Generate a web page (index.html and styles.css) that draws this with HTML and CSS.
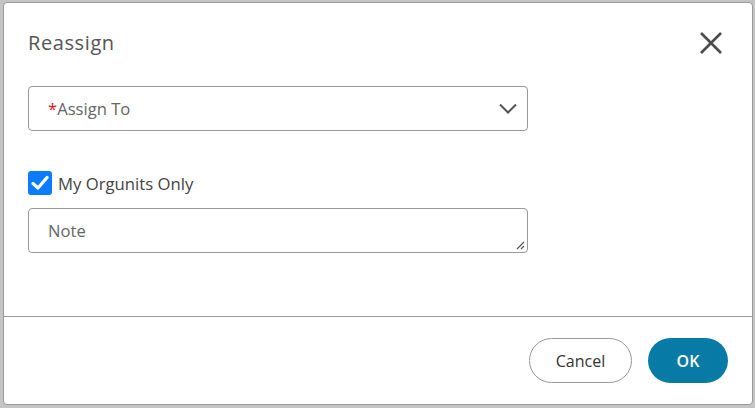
FILE: index.html
```html
<!DOCTYPE html>
<html>
<head>
<meta charset="utf-8">
<link rel="stylesheet" href="styles.css">
</head>
<body>
<div class="backdrop">
  <div class="dialog">
    <div class="dialog-body">
      <div class="header">
        <h2 class="title">Reassign</h2>
        <button class="close" aria-label="Close">
          <svg width="24" height="24" viewBox="0 0 24 24"><path d="M2 2 L22 22 M22 2 L2 22" stroke="#4a4a4a" stroke-width="2.6" fill="none"/></svg>
        </button>
      </div>
      <div class="select">
        <span class="placeholder"><span class="req">*</span>Assign To</span>
        <svg class="chevron" width="18" height="11" viewBox="0 0 18 11"><path d="M1 1.5 L9 9.5 L17 1.5" stroke="#555" stroke-width="2" fill="none"/></svg>
      </div>
      <label class="check">
        <span class="box"><svg width="18" height="16" viewBox="0 0 18 16"><path d="M2 8.5 L7 13 L16 2.5" stroke="#fff" stroke-width="3.2" fill="none" stroke-linecap="round" stroke-linejoin="round"/></svg></span>
        <span class="check-label">My Orgunits Only</span>
      </label>
      <div class="note">
        <span class="placeholder">Note</span>
        <svg class="grip" width="9" height="9" viewBox="0 0 9 9"><path d="M8 1 L1 8 M8 5 L5 8" stroke="#555" stroke-width="1.2" fill="none"/></svg>
      </div>
    </div>
    <div class="footer">
      <button class="btn btn-cancel">Cancel</button>
      <button class="btn btn-ok">OK</button>
    </div>
  </div>
</div>
</body>
</html>
```
FILE: styles.css
```css
html, body {
  margin: 0;
  padding: 0;
}
body {
  background: #c4c4c4;
  width: 755px;
  height: 408px;
  overflow: hidden;
}
.backdrop {
  padding: 2px 2px 0 3px;
  height: 408px;
  box-sizing: border-box;
}
.dialog {
  background: #fff;
  border: 1px solid #9a9a9a;
  border-radius: 4px;
  height: 403px;
  box-sizing: border-box;
  display: flex;
  flex-direction: column;
  font-family: "Open Sans", Lato, sans-serif;
}
.dialog-body {
  padding: 27px 24px 0 24px;
  height: 314px;
  box-sizing: border-box;
  border-bottom: 1px solid #9a9a9a;
}
.header {
  display: flex;
  justify-content: space-between;
  align-items: center;
  height: 26px;
}
.title {
  margin: 0;
  font-weight: 400;
  font-size: 20px;
  letter-spacing: 0.6px;
  color: #555;
  line-height: 26px;
}
.close {
  border: none;
  background: none;
  padding: 0;
  margin-right: 5px;
  width: 24px;
  height: 24px;
  display: flex;
}
.select, .note {
  width: 500px;
  height: 45px;
  box-sizing: border-box;
  border: 1px solid #999;
  border-radius: 4px;
  display: flex;
  align-items: center;
  padding: 0 10px 0 19px;
  justify-content: space-between;
  position: relative;
}
.select {
  margin-top: 30px;
}
.placeholder {
  font-size: 16.6px;
  color: #666;
  margin-top: -1px;
}
.req {
  color: #e0141e;
}
.check {
  display: flex;
  align-items: center;
  margin-top: 40px;
  height: 24px;
}
.box {
  width: 24px;
  height: 24px;
  background: #0b7cff;
  border-radius: 3px;
  display: flex;
  align-items: center;
  justify-content: center;
}
.check-label {
  margin-left: 6px;
  font-size: 16.7px;
  color: #444;
}
.note {
  margin-top: 13px;
}
.grip {
  position: absolute;
  right: 2px;
  bottom: 2px;
}
.footer {
  flex: 1;
  display: flex;
  justify-content: flex-end;
  align-items: flex-start;
  padding: 21px 24px 0 0;
  gap: 16px;
}
.btn {
  height: 45px;
  border-radius: 23px;
  font-family: "Open Sans", sans-serif;
  font-size: 16px;
  padding: 0;
}
.btn-cancel {
  width: 103px;
  background: #fff;
  border: 1px solid #999;
  color: #333;
}
.btn-ok {
  width: 80px;
  background: #077ba6;
  border: none;
  color: #fff;
  font-weight: 600;
}
```
